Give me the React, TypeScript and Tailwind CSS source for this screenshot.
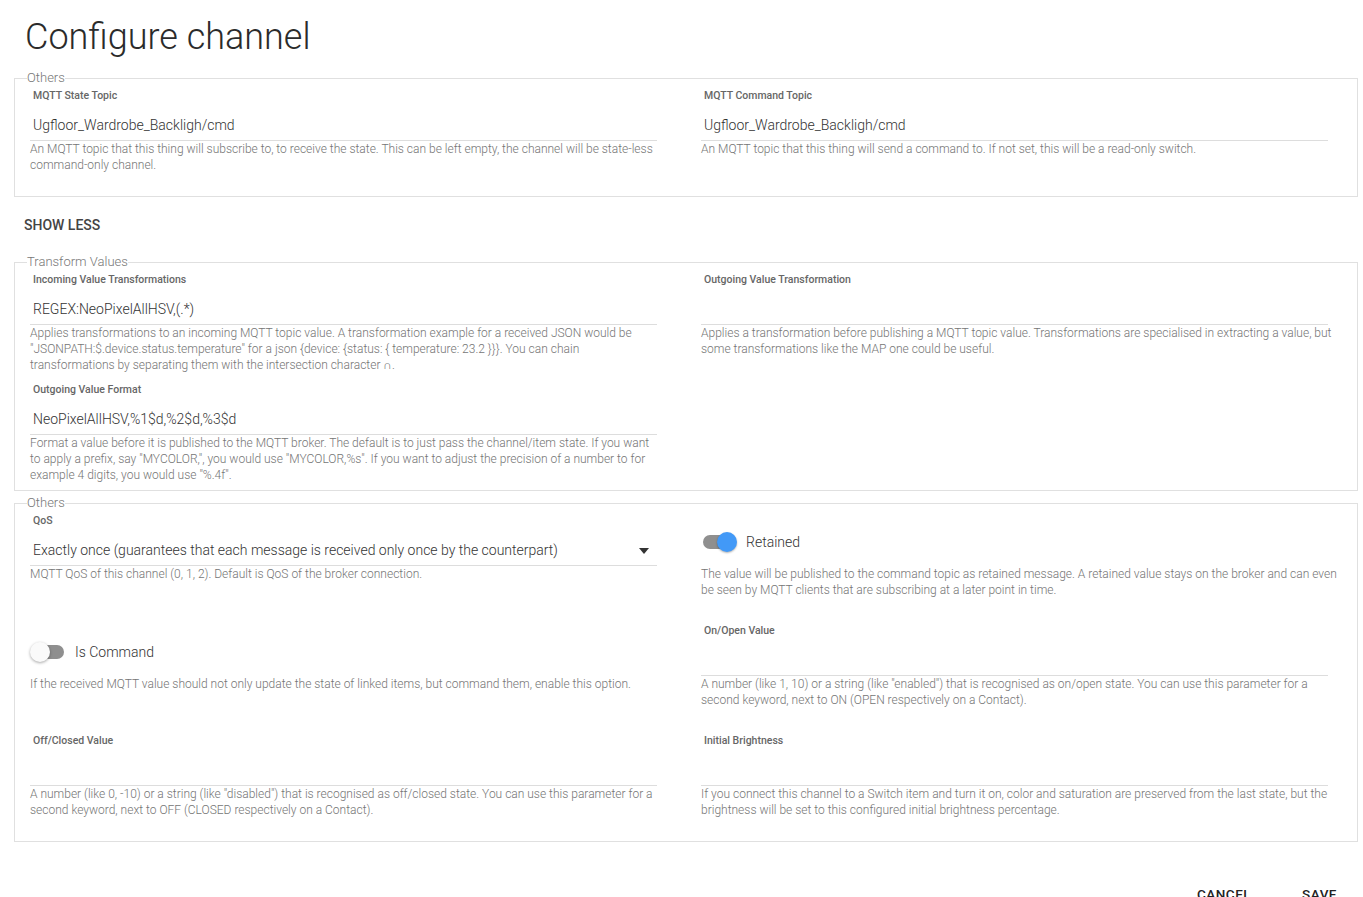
import type { ReactNode } from "react";

type Item =
  | { kind: "text"; label: string; value?: string; help: string }
  | { kind: "select"; label: string; value: string; help: string }
  | { kind: "toggle"; label: string; on: boolean; help: string };

const font = { fontFamily: "Roboto, 'Noto Sans', sans-serif" };

const transformItems: Item[] = [
  {
    kind: "text",
    label: "Incoming Value Transformations",
    value: "REGEX:NeoPixelAllHSV,(.*)",
    help: 'Applies transformations to an incoming MQTT topic value. A transformation example for a received JSON would be "JSONPATH:$.device.status.temperature" for a json {device: {status: { temperature: 23.2 }}}. You can chain transformations by separating them with the intersection character ∩.',
  },
  {
    kind: "text",
    label: "Outgoing Value Transformation",
    help: "Applies a transformation before publishing a MQTT topic value. Transformations are specialised in extracting a value, but some transformations like the MAP one could be useful.",
  },
  {
    kind: "text",
    label: "Outgoing Value Format",
    value: "NeoPixelAllHSV,%1$d,%2$d,%3$d",
    help: 'Format a value before it is published to the MQTT broker. The default is to just pass the channel/item state. If you want to apply a prefix, say "MYCOLOR,", you would use "MYCOLOR,%s". If you want to adjust the precision of a number to for example 4 digits, you would use "%.4f".',
  },
];

const topicItems: Item[] = [
  {
    kind: "text",
    label: "MQTT State Topic",
    value: "Ugfloor_Wardrobe_Backligh/cmd",
    help: "An MQTT topic that this thing will subscribe to, to receive the state. This can be left empty, the channel will be state-less command-only channel.",
  },
  {
    kind: "text",
    label: "MQTT Command Topic",
    value: "Ugfloor_Wardrobe_Backligh/cmd",
    help: "An MQTT topic that this thing will send a command to. If not set, this will be a read-only switch.",
  },
];

const otherItems: Item[] = [
  {
    kind: "select",
    label: "QoS",
    value: "Exactly once (guarantees that each message is received only once by the counterpart)",
    help: "MQTT QoS of this channel (0, 1, 2). Default is QoS of the broker connection.",
  },
  {
    kind: "toggle",
    label: "Retained",
    on: true,
    help: "The value will be published to the command topic as retained message. A retained value stays on the broker and can even be seen by MQTT clients that are subscribing at a later point in time.",
  },
  {
    kind: "toggle",
    label: "Is Command",
    on: false,
    help: "If the received MQTT value should not only update the state of linked items, but command them, enable this option.",
  },
  {
    kind: "text",
    label: "On/Open Value",
    help: 'A number (like 1, 10) or a string (like "enabled") that is recognised as on/open state. You can use this parameter for a second keyword, next to ON (OPEN respectively on a Contact).',
  },
  {
    kind: "text",
    label: "Off/Closed Value",
    help: 'A number (like 0, -10) or a string (like "disabled") that is recognised as off/closed state. You can use this parameter for a second keyword, next to OFF (CLOSED respectively on a Contact).',
  },
  {
    kind: "text",
    label: "Initial Brightness",
    help: "If you connect this channel to a Switch item and turn it on, color and saturation are preserved from the last state, but the brightness will be set to this configured initial brightness percentage.",
  },
];

// help text on the right column runs a little past the underline
const Help = ({ children, wide }: { children: ReactNode; wide: boolean }) => (
  <p className={`text-[12px] font-light leading-[16px] text-[#757575] ${wide ? "mr-[-12px]" : ""}`}>{children}</p>
);

const Toggle = ({ on }: { on: boolean }) => (
  <div className="relative h-[20px] w-[36px] shrink-0">
    <div className="absolute left-[2px] right-[2px] top-[3px] h-[14px] rounded-full bg-[#8f8f8f]" />
    <div
      className={
        on
          ? "absolute left-[16px] top-0 h-[20px] w-[20px] rounded-full bg-[#4299f7] shadow-[0_1px_2px_rgba(0,0,0,0.3)]"
          : "absolute left-0 top-0 h-[20px] w-[20px] rounded-full bg-[#fafafa] shadow-[0_1px_3px_rgba(0,0,0,0.35)]"
      }
    />
  </div>
);

const Field = ({ item, wide }: { item: Item; wide: boolean }) => {
  if (item.kind === "toggle") {
    return (
      <div className="h-[100px]">
        <div className="flex h-[55px] items-start pt-[21px]">
          <div className="flex items-center gap-[9px]">
            <Toggle on={item.on} />
            <span className="text-[14px] font-light leading-[20px] text-[#333]">{item.label}</span>
          </div>
        </div>
        <Help wide={wide}>{item.help}</Help>
      </div>
    );
  }
  return (
    <div className="h-[100px]">
      <div className="h-[20px] pl-[3px] text-[10.5px] font-medium leading-[20px] text-[#666]">{item.label}</div>
      <div className="flex h-[35px] items-end justify-between border-b border-[#dddddd] pb-[6px] pl-[3px] text-[14px] font-light leading-[18px] text-[#333]">
        <span>{item.value ?? ""}</span>
        {item.kind === "select" && (
          <svg width="10" height="6" viewBox="0 0 10 6" className="mb-[5px] mr-[8px]">
            <path d="M0 0h10L5 6z" fill="#333" />
          </svg>
        )}
      </div>
      <Help wide={wide}>{item.help}</Help>
    </div>
  );
};

const Group = ({ title, items, className = "" }: { title: string; items: Item[]; className?: string }) => (
  <fieldset className={`border border-[#e0e0e0] ${className}`}>
    <legend className="ml-[12px] text-[13px] font-light leading-[16px] text-[#777]">{title}</legend>
    <div className="grid grid-cols-2 gap-x-[44px] gap-y-[10px] pb-[10px] pl-[15px] pr-[29px]">
      {items.map((item, i) => (
        <Field key={item.label} item={item} wide={i % 2 === 1} />
      ))}
    </div>
  </fieldset>
);

export default function App() {
  return (
    <div className="h-screen overflow-hidden bg-white pl-[14px] pr-[5px]" style={font}>
      <h1 className="pl-[11px] pt-[17px] text-[36px] font-light leading-[40px] text-[#2b2b2b]">Configure channel</h1>

      <Group title="Others" items={topicItems} className="mt-[13px]" />

      <div className="mb-[11px] ml-[10px] mt-[10px] h-[36px] text-[14px] font-medium uppercase leading-[36px] text-[#444]">
        Show less
      </div>

      <Group title="Transform Values" items={transformItems} />
      <Group title="Others" items={otherItems} className="mt-[4px]" />

      <div className="mr-[5px] mt-[34px] flex justify-end gap-[19px]">
        <button className="h-[36px] px-[16px] text-[13.5px] font-medium uppercase tracking-[0.5px] text-[#222]">Cancel</button>
        <button className="h-[36px] px-[16px] text-[13.5px] font-medium uppercase tracking-[0.5px] text-[#222]">Save</button>
      </div>
    </div>
  );
}
